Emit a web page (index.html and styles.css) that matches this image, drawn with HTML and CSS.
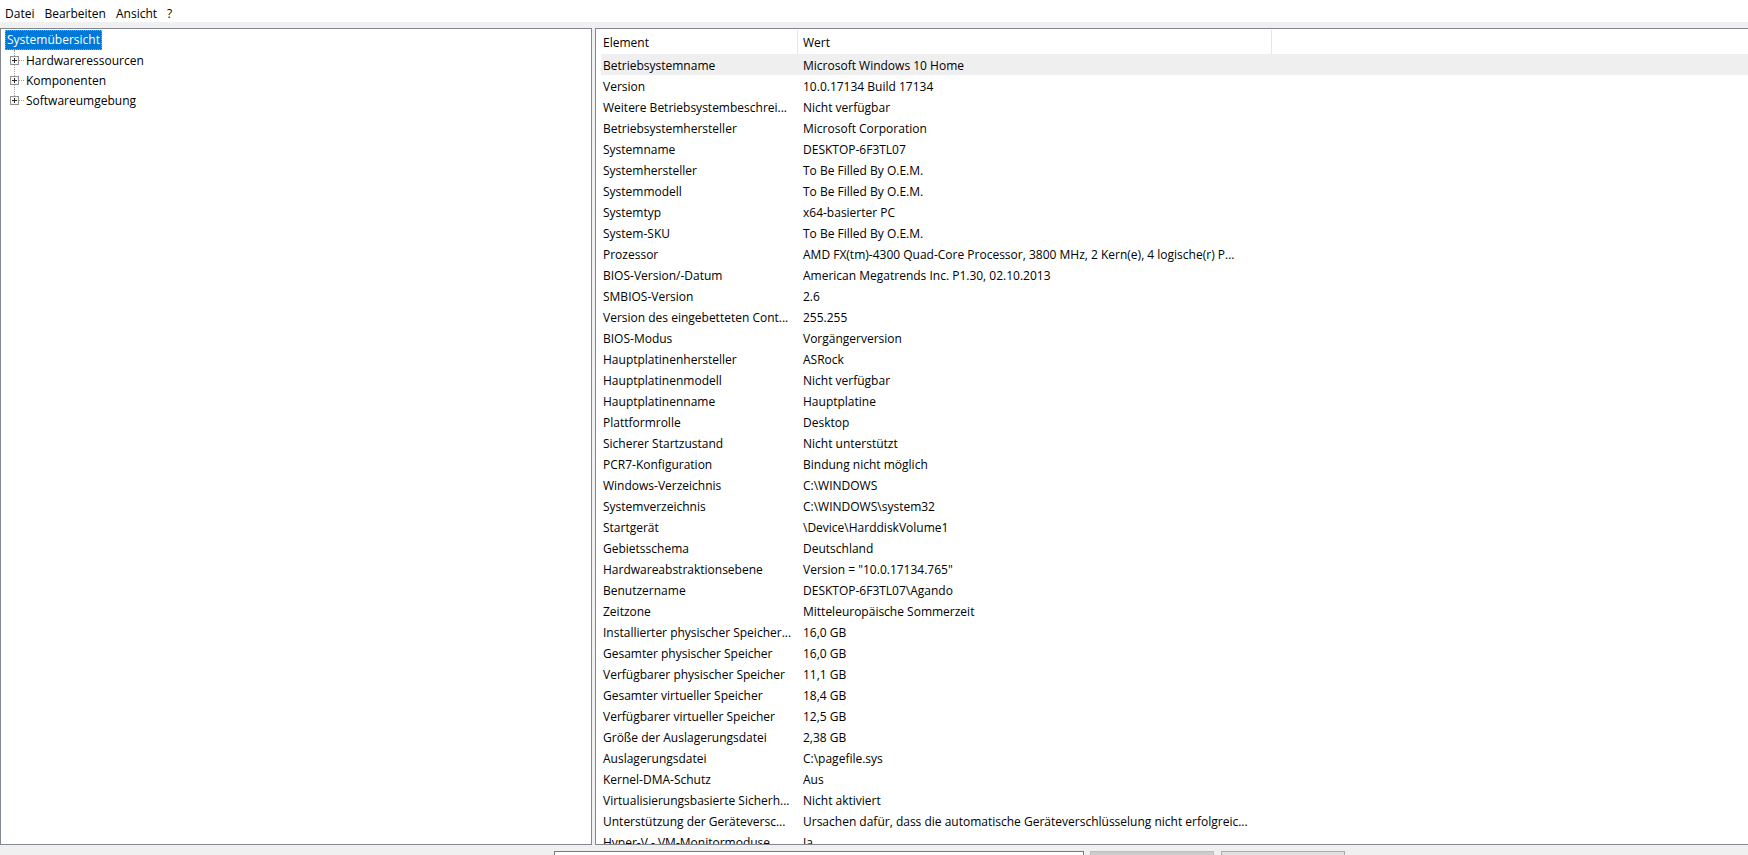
FILE: index.html
```html
<!DOCTYPE html>
<html lang="de">
<head>
    <meta charset="UTF-8">
    <meta name="viewport" content="width=device-width, initial-scale=1.0">
    <title>Systeminformationen</title>
    <link rel="stylesheet" href="styles.css">
</head>
<body>
    <!-- Menu -->
    <div class="menubar">
        <span class="menu-item">Datei</span>
        <span class="menu-item">Bearbeiten</span>
        <span class="menu-item">Ansicht</span>
        <span class="menu-item">?</span>
    </div>

    <main class="main">
        <!-- Tree on the left -->
        <div class="tree">
            <div class="tree-root"><span class="tree-label selected">Systemübersicht</span></div>
            <div class="tree-children">
                <div class="tree-node">
                    <svg class="expander" width="9" height="9" viewBox="0 0 9 9"><rect x="0.5" y="0.5" width="8" height="8" fill="#f7f7f7" stroke="#919191"/><path d="M2 4.5h5M4.5 2v5" stroke="#2b2b2b"/></svg>
                    <span class="connector"></span>
                    <span class="tree-label">Hardwareressourcen</span>
                </div>
                <div class="tree-node">
                    <svg class="expander" width="9" height="9" viewBox="0 0 9 9"><rect x="0.5" y="0.5" width="8" height="8" fill="#f7f7f7" stroke="#919191"/><path d="M2 4.5h5M4.5 2v5" stroke="#2b2b2b"/></svg>
                    <span class="connector"></span>
                    <span class="tree-label">Komponenten</span>
                </div>
                <div class="tree-node">
                    <svg class="expander" width="9" height="9" viewBox="0 0 9 9"><rect x="0.5" y="0.5" width="8" height="8" fill="#f7f7f7" stroke="#919191"/><path d="M2 4.5h5M4.5 2v5" stroke="#2b2b2b"/></svg>
                    <span class="connector"></span>
                    <span class="tree-label">Softwareumgebung</span>
                </div>
            </div>
        </div>

        <!-- Details list on the right -->
        <div class="details">
            <div class="list-header">
                <div class="head-cell">Element</div>
                <div class="head-cell value">Wert</div>
            </div>
            <div class="row hot"><div class="cell">Betriebsystemname</div><div class="cell value">Microsoft Windows 10 Home</div></div>
            <div class="row"><div class="cell">Version</div><div class="cell value">10.0.17134 Build 17134</div></div>
            <div class="row"><div class="cell">Weitere Betriebsystembeschrei...</div><div class="cell value">Nicht verfügbar</div></div>
            <div class="row"><div class="cell">Betriebsystemhersteller</div><div class="cell value">Microsoft Corporation</div></div>
            <div class="row"><div class="cell">Systemname</div><div class="cell value">DESKTOP-6F3TL07</div></div>
            <div class="row"><div class="cell">Systemhersteller</div><div class="cell value">To Be Filled By O.E.M.</div></div>
            <div class="row"><div class="cell">Systemmodell</div><div class="cell value">To Be Filled By O.E.M.</div></div>
            <div class="row"><div class="cell">Systemtyp</div><div class="cell value">x64-basierter PC</div></div>
            <div class="row"><div class="cell">System-SKU</div><div class="cell value">To Be Filled By O.E.M.</div></div>
            <div class="row"><div class="cell">Prozessor</div><div class="cell value">AMD FX(tm)-4300 Quad-Core Processor, 3800 MHz, 2 Kern(e), 4 logische(r) P...</div></div>
            <div class="row"><div class="cell">BIOS-Version/-Datum</div><div class="cell value">American Megatrends Inc. P1.30, 02.10.2013</div></div>
            <div class="row"><div class="cell">SMBIOS-Version</div><div class="cell value">2.6</div></div>
            <div class="row"><div class="cell">Version des eingebetteten Cont...</div><div class="cell value">255.255</div></div>
            <div class="row"><div class="cell">BIOS-Modus</div><div class="cell value">Vorgängerversion</div></div>
            <div class="row"><div class="cell">Hauptplatinenhersteller</div><div class="cell value">ASRock</div></div>
            <div class="row"><div class="cell">Hauptplatinenmodell</div><div class="cell value">Nicht verfügbar</div></div>
            <div class="row"><div class="cell">Hauptplatinenname</div><div class="cell value">Hauptplatine</div></div>
            <div class="row"><div class="cell">Plattformrolle</div><div class="cell value">Desktop</div></div>
            <div class="row"><div class="cell">Sicherer Startzustand</div><div class="cell value">Nicht unterstützt</div></div>
            <div class="row"><div class="cell">PCR7-Konfiguration</div><div class="cell value">Bindung nicht möglich</div></div>
            <div class="row"><div class="cell">Windows-Verzeichnis</div><div class="cell value">C:\WINDOWS</div></div>
            <div class="row"><div class="cell">Systemverzeichnis</div><div class="cell value">C:\WINDOWS\system32</div></div>
            <div class="row"><div class="cell">Startgerät</div><div class="cell value">\Device\HarddiskVolume1</div></div>
            <div class="row"><div class="cell">Gebietsschema</div><div class="cell value">Deutschland</div></div>
            <div class="row"><div class="cell">Hardwareabstraktionsebene</div><div class="cell value">Version = "10.0.17134.765"</div></div>
            <div class="row"><div class="cell">Benutzername</div><div class="cell value">DESKTOP-6F3TL07\Agando</div></div>
            <div class="row"><div class="cell">Zeitzone</div><div class="cell value">Mitteleuropäische Sommerzeit</div></div>
            <div class="row"><div class="cell">Installierter physischer Speicher...</div><div class="cell value">16,0 GB</div></div>
            <div class="row"><div class="cell">Gesamter physischer Speicher</div><div class="cell value">16,0 GB</div></div>
            <div class="row"><div class="cell">Verfügbarer physischer Speicher</div><div class="cell value">11,1 GB</div></div>
            <div class="row"><div class="cell">Gesamter virtueller Speicher</div><div class="cell value">18,4 GB</div></div>
            <div class="row"><div class="cell">Verfügbarer virtueller Speicher</div><div class="cell value">12,5 GB</div></div>
            <div class="row"><div class="cell">Größe der Auslagerungsdatei</div><div class="cell value">2,38 GB</div></div>
            <div class="row"><div class="cell">Auslagerungsdatei</div><div class="cell value">C:\pagefile.sys</div></div>
            <div class="row"><div class="cell">Kernel-DMA-Schutz</div><div class="cell value">Aus</div></div>
            <div class="row"><div class="cell">Virtualisierungsbasierte Sicherh...</div><div class="cell value">Nicht aktiviert</div></div>
            <div class="row"><div class="cell">Unterstützung der Geräteversc...</div><div class="cell value">Ursachen dafür, dass die automatische Geräteverschlüsselung nicht erfolgreic...</div></div>
            <div class="row"><div class="cell">Hyper-V - VM-Monitormoduse...</div><div class="cell value">Ja</div></div>
        </div>
    </main>

    <!-- Search bar, only its top edge is in view -->
    <div class="searchbar">
        <input type="text" class="search-input" aria-label="Suchen nach">
        <button class="btn btn-disabled" aria-label="Suchen"></button>
        <button class="btn" aria-label="Suche schließen"></button>
    </div>
</body>
</html>
```

FILE: styles.css
```css
* {
    box-sizing: border-box;
}

body {
    font-family: "Segoe UI", "Open Sans", sans-serif;
    font-size: 12px;
    color: #000;
    margin: 0;
    padding: 0;
    width: 1748px;
    height: 855px;
    overflow: hidden;
    background-color: #f0f0f0;
}

.menubar {
    height: 22px;
    background-color: #fff;
    display: flex;
    gap: 10px;
    padding: 5px 0 0 5px;
    line-height: 17px;
}

.main {
    display: flex;
    gap: 3px;
    padding-top: 6px;
    height: 823px;
}

.tree {
    width: 592px;
    background-color: #fff;
    border: 1px solid #828790;
    padding: 1px 0 0 4px;
}

.tree-root {
    height: 20px;
}

.tree-label {
    display: inline-block;
    height: 20px;
    line-height: 18px;
    padding: 0 1px;
    border: 1px solid transparent;
    white-space: nowrap;
}

.tree-label.selected {
    background-color: #0078d7;
    color: #fff;
    border: 1px dotted #ff8728;
}

.tree-children {
    margin-left: 9px;
    height: 50px;
    border-left: 1px dotted #a0a0a0;
}

.tree-node {
    display: flex;
    align-items: center;
    height: 20px;
    margin-left: -5px;
}

.tree-node .tree-label {
    padding-top: 2px;
    line-height: 16px;
}

.expander {
    display: block;
    flex-shrink: 0;
}

.connector {
    width: 5px;
    border-top: 1px dotted #a0a0a0;
}

.details {
    flex: 1;
    background-color: #fff;
    border: 1px solid #828790;
    border-right: none;
    overflow: hidden;
    padding-left: 5px;
}

.list-header {
    display: grid;
    grid-template-columns: 197px 474px;
    height: 25px;
}

.head-cell {
    margin-top: 1px;
    height: 24px;
    padding: 2px 0 0 2px;
    line-height: 22px;
    border-right: 1px solid #e5e5e5;
}

.head-cell.value {
    padding-left: 5px;
}

.row {
    display: grid;
    grid-template-columns: 197px 474px;
    height: 21px;
}

.row.hot {
    background-color: #efefef;
}

.cell {
    padding: 2px 4px 0 2px;
    line-height: 20px;
    white-space: nowrap;
    overflow: hidden;
    text-overflow: ellipsis;
}

.cell.value {
    padding-left: 5px;
}

.searchbar {
    display: flex;
    padding: 6px 0 0 554px;
}

.search-input {
    width: 530px;
    height: 23px;
    margin: 0;
    border: 1px solid #7a7a7a;
    background-color: #fff;
}

.btn {
    width: 124px;
    height: 23px;
    margin: 0 0 0 6px;
    background-color: #e1e1e1;
    border: 1px solid #adadad;
}

.btn-disabled {
    background-color: #cccccc;
    border-color: #bfbfbf;
}

.btn + .btn {
    margin-left: 7px;
}
```
